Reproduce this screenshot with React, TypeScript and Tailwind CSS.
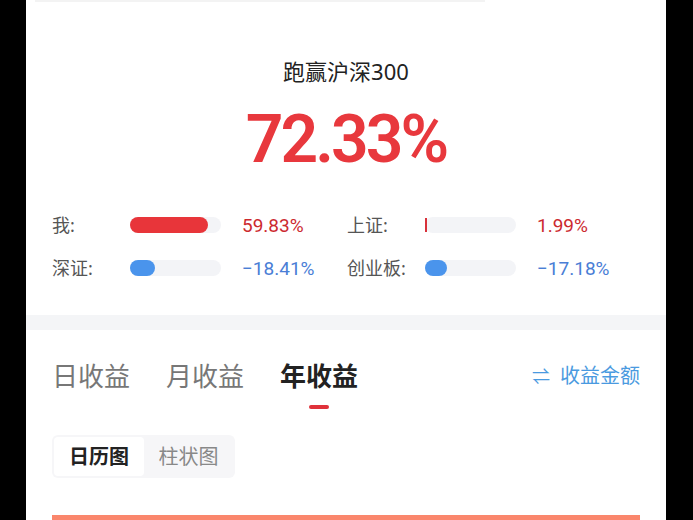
import React from 'react';

interface StatProps {
    label: string;
    value: string;
    percent: number;
    positive: boolean;
}

function Stat({ label, value, percent, positive }: StatProps) {
    // tiny values show as a thin tick instead of a pill
    const tick = percent < 4;
    return (
        <div className="flex items-center h-[30px]">
            <span className="w-[78px] text-[18px] text-[#555] leading-none">{label}</span>
            <div className="w-[91px] h-4 rounded-full bg-[#f3f4f7] flex items-center">
                {tick ? (
                    <div className="h-[14px] w-[2px] bg-[#d8313a]" />
                ) : (
                    <div
                        className={positive ? 'h-full rounded-full bg-[#e8353a]' : 'h-full rounded-full bg-[#4a94ec]'}
                        style={{ width: `${percent}%` }}
                    />
                )}
            </div>
            <span
                className={
                    positive
                        ? 'ml-[21px] text-[19px] leading-none text-[#cc2a2f] font-[Roboto]'
                        : 'ml-[21px] text-[19px] leading-none text-[#4a7ed6] font-[Roboto]'
                }
            >
                {value}
            </span>
        </div>
    );
}

export default function App() {
    return (
        <div
            className="w-[693px] h-[520px] bg-black flex overflow-hidden"
            style={{ fontFamily: '"Noto Sans", "Noto Sans CJK SC", sans-serif' }}
        >
            <div className="ml-[26px] w-[640px] bg-white flex flex-col">
                {/* top section */}
                <div className="h-[315px] shrink-0 flex flex-col">
                    <div className="ml-[9px] w-[450px] h-[2px] bg-[#f3f3f3]" />
                    <div className="mt-[54px] text-center text-[22px] leading-[30px] text-[#222]">跑赢沪深300</div>
                    <div className="mt-[19px] text-center text-[66px] leading-[70px] font-semibold tracking-[-3px] text-[#e8383d] font-[Roboto]">
                        72.33%
                    </div>
                    <div className="mt-[35px] px-[26px] grid grid-cols-[295px_1fr] gap-y-[13px]">
                        <Stat label="我:" value="59.83%" percent={86} positive />
                        <Stat label="上证:" value="1.99%" percent={2} positive />
                        <Stat label="深证:" value="−18.41%" percent={27} positive={false} />
                        <Stat label="创业板:" value="−17.18%" percent={24} positive={false} />
                    </div>
                </div>

                <div className="h-[15px] shrink-0 bg-[#f4f5f7]" />

                {/* tabs */}
                <div className="pt-[28px] px-[26px] shrink-0 flex items-start justify-between">
                    <div className="flex gap-[36px]">
                        <div className="text-[26px] leading-[36px] text-[#777]">日收益</div>
                        <div className="text-[26px] leading-[36px] text-[#777]">月收益</div>
                        <div className="flex flex-col items-center">
                            <div className="text-[26px] leading-[36px] font-bold text-[#222]">年收益</div>
                            <div className="mt-[11px] w-5 h-1 rounded-full bg-[#e0323a]" />
                        </div>
                    </div>
                    <div className="flex items-center h-[36px] text-[20px] text-[#4a9ae0]">
                        <span className="mr-[10px] text-[18px]">⇌</span>
                        收益金额
                    </div>
                </div>

                {/* segmented */}
                <div className="mt-[26px] ml-[26px] shrink-0 w-[183px] h-[43px] p-[2px] rounded-md bg-[#f6f6f8] flex">
                    <div className="w-[90px] rounded bg-white flex items-center justify-center text-[20px] font-bold text-[#222]">
                        日历图
                    </div>
                    <div className="flex-1 flex items-center justify-center text-[20px] text-[#888]">柱状图</div>
                </div>

                <div className="mt-[37px] mx-[26px] h-[20px] shrink-0 bg-[#fa866c]" />
            </div>
        </div>
    );
}
